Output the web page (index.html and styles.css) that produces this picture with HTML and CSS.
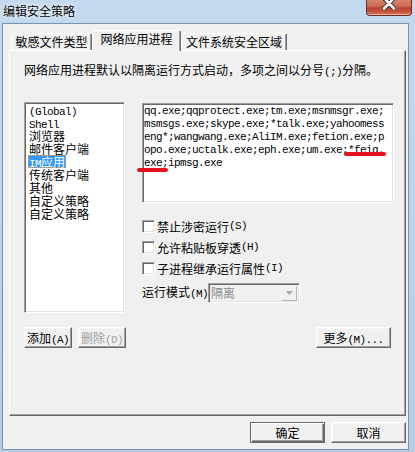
FILE: index.html
```html
<!DOCTYPE html>
<html lang="zh-CN">
<head>
<meta charset="utf-8">
<title>编辑安全策略</title>
<link rel="stylesheet" href="styles.css">
</head>
<body>
<div class="window">
  <div class="titlebar">
    <span class="title">编辑安全策略</span>
    <div class="close">
      <svg width="14" height="10" viewBox="0 0 14 10">
        <path d="M2 -2 L12 8.5 M12 -2 L2 8.5" stroke="#3d2a28" stroke-width="4.6" stroke-linecap="round"/>
        <path d="M2 -2 L12 8.5 M12 -2 L2 8.5" stroke="#ffffff" stroke-width="2.6" stroke-linecap="round"/>
      </svg>
    </div>
  </div>
  <div class="client">
    <div class="tabs">
      <div class="tab t1">敏感文件类型</div>
      <div class="tab t2 active">网络应用进程</div>
      <div class="tab t3">文件系统安全区域</div>
    </div>
    <div class="panel">
      <p class="desc">网络应用进程默认以隔离运行方式启动，多项之间以分号<span class="a">(;)</span>分隔。</p>
      <div class="main">
        <ul class="list">
          <li><span class="it a">(Global)</span></li>
          <li><span class="it a">Shell</span></li>
          <li><span class="it">浏览器</span></li>
          <li><span class="it">邮件客户端</span></li>
          <li><span class="it sel"><span class="a">IM</span>应用</span></li>
          <li><span class="it">传统客户端</span></li>
          <li><span class="it">其他</span></li>
          <li><span class="it">自定义策略</span></li>
          <li><span class="it">自定义策略</span></li>
        </ul>
        <div class="right">
          <div class="edit-wrap">
            <div class="edit">qq.exe;qqprotect.exe;tm.exe;msnmsgr.exe;
msmsgs.exe;skype.exe;*talk.exe;yahoomess
eng*;wangwang.exe;AliIM.exe;fetion.exe;p
opo.exe;uctalk.exe;eph.exe;um.exe;*feiq.
exe;ipmsg.exe</div>
            <i class="mark m1"></i>
            <i class="mark m2"></i>
          </div>
          <label class="chk first"><span class="box"></span>禁止涉密运行<span class="a">(S)</span></label>
          <label class="chk"><span class="box"></span>允许粘贴板穿透<span class="a">(H)</span></label>
          <label class="chk"><span class="box"></span>子进程继承运行属性<span class="a">(I)</span></label>
          <div class="mode">
            <span class="mode-label">运行模式<span class="a">(M)</span></span>
            <div class="combo">
              <span class="val">隔离</span>
              <span class="arrow">
                <svg width="7" height="4" viewBox="0 0 7 4"><path d="M0 0 H7 L3.5 4 Z" fill="#a8a8a8"/></svg>
              </span>
            </div>
          </div>
        </div>
      </div>
      <div class="btnrow">
        <button class="btn small">添加<span class="a">(A)</span></button>
        <button class="btn small second" disabled>删除<span class="a">(D)</span></button>
        <button class="btn wide more">更多<span class="a">(M)...</span></button>
      </div>
    </div>
    <div class="footer">
      <button class="btn wide default">确定</button>
      <button class="btn wide">取消</button>
    </div>
  </div>
</div>
</body>
</html>
```
FILE: styles.css
```css
* { box-sizing: border-box; }

html, body {
  margin: 0;
  padding: 0;
}

body {
  width: 415px;
  height: 452px;
  overflow: hidden;
  font-family: "Noto Sans CJK SC", "Liberation Sans", sans-serif;
  font-size: 12px;
  line-height: 13px;
  color: #000;
  background: linear-gradient(180deg, #c3d9f0 0%, #bcd4ed 40%, #b3cce8 100%);
}

.a {
  font-family: "Liberation Mono", monospace;
  font-size: 11px;
  letter-spacing: -0.6px;
}

.window {
  width: 415px;
  height: 452px;
  display: flex;
  flex-direction: column;
}

/* title bar */
.titlebar {
  flex: none;
  height: 23px;
  display: flex;
  justify-content: space-between;
  align-items: flex-start;
}

.title {
  padding: 4px 0 0 3px;
  line-height: 14px;
  color: #000;
  text-shadow: 0 0 6px rgba(255, 255, 255, 0.95), 0 0 3px rgba(255, 255, 255, 0.9);
}

.close {
  width: 46px;
  height: 16px;
  margin-right: 3px;
  border: 1px solid #6a3028;
  border-top: none;
  border-radius: 0 0 4px 4px;
  background: linear-gradient(180deg, #d7826e 0%, #cd6a52 40%, #b8442e 55%, #c3563d 80%, #d8836a 100%);
  box-shadow: inset 0 -1px 0 rgba(255, 200, 180, 0.6);
  display: flex;
  justify-content: center;
  align-items: flex-start;
}

/* client area */
.client {
  flex: none;
  height: 427px;
  margin: 0 6px 2px 2px;
  border: 1px solid #7d93ad;
  background: #f0f0f0;
  padding: 6px 2px 6px 6px;
  display: flex;
  flex-direction: column;
}

/* tabs */
.tabs {
  flex: none;
  height: 20px;
  display: flex;
  align-items: flex-end;
  padding-left: 2px;
}

.tab {
  height: 17px;
  border: 1px solid;
  border-bottom: none;
  border-color: #ffffff #696969 transparent #ffffff;
  border-radius: 2px 2px 0 0;
  box-shadow: inset -1px 0 0 #a0a0a0;
  background: #f0f0f0;
  text-align: center;
  line-height: 15px;
  white-space: nowrap;
}

.t1 { width: 81px; }
.t2 { width: 89px; }
.t3 { width: 106px; }

.tab.active {
  height: 21px;
  margin-bottom: -1px;
  position: relative;
  z-index: 1;
}

/* panel */
.panel {
  flex: none;
  height: 366px;
  border: 1px solid;
  border-color: #ffffff #696969 #696969 #ffffff;
  box-shadow: inset -1px -1px 0 #a0a0a0;
  padding: 12px 14px 0 14px;
  display: flex;
  flex-direction: column;
}

.desc {
  margin: 0;
  height: 13px;
  line-height: 13px;
  white-space: nowrap;
}

.main {
  margin-top: 26px;
  display: flex;
  gap: 17px;
  align-items: flex-start;
}

.sunken {
  background: #fff;
}

.list {
  flex: none;
  width: 101px;
  height: 211px;
  margin: 0;
  padding: 0 0 0 2px;
  list-style: none;
  background: #fff;
  border: 1px solid;
  border-color: #a0a0a0 #ffffff #ffffff #a0a0a0;
  box-shadow: inset 1px 1px 0 #696969, inset -1px -1px 0 #e3e3e3;
}

.list li {
  height: 13px;
  line-height: 13px;
  padding-left: 1px;
  white-space: nowrap;
}

.it {
  display: inline-block;
  height: 13px;
  padding: 0 1px;
}

.it.sel {
  background: #3399ff;
  color: #fff;
  outline: 1px dotted #f4a340;
  outline-offset: -1px;
}

.right {
  flex: none;
  width: 252px;
  display: flex;
  flex-direction: column;
}

.edit-wrap {
  position: relative;
  margin-top: 1px;
  height: 100px;
}

.edit {
  height: 100px;
  background: #fff;
  border: 1px solid;
  border-color: #a0a0a0 #ffffff #ffffff #a0a0a0;
  box-shadow: inset 1px 1px 0 #696969, inset -1px -1px 0 #e3e3e3;
  padding: 1px 0 0 1px;
  font-family: "Liberation Mono", monospace;
  font-size: 11px;
  letter-spacing: -0.6px;
  line-height: 13px;
  white-space: pre;
  overflow: hidden;
}

.mark {
  position: absolute;
  height: 4px;
  border-radius: 2px;
  background: #e3141d;
}

.m1 { left: 202px; top: 49px; width: 42px; }
.m2 { left: -5px; top: 65px; width: 31px; }

.chk {
  height: 21px;
  display: flex;
  align-items: center;
  white-space: nowrap;
}

.chk.first { margin-top: 13px; }

.box {
  flex: none;
  width: 13px;
  height: 13px;
  margin-right: 2px;
  background: #fff;
  border: 1px solid;
  border-color: #a0a0a0 #ffffff #ffffff #a0a0a0;
  box-shadow: inset 1px 1px 0 #696969, inset -1px -1px 0 #e3e3e3;
}

.mode {
  margin-top: 4px;
  height: 20px;
  display: flex;
  align-items: center;
}

.mode-label {
  width: 66px;
  white-space: nowrap;
}

.combo {
  width: 92px;
  height: 20px;
  border: 1px solid;
  border-color: #a0a0a0 #ffffff #ffffff #a0a0a0;
  box-shadow: inset 1px 1px 0 #696969, inset -1px -1px 0 #e3e3e3;
  background: #f0f0f0;
  padding: 2px 2px 2px 2px;
  display: flex;
  align-items: center;
  color: #8c8c8c;
}

.val {
  flex: 1;
  line-height: 14px;
}

.arrow {
  width: 16px;
  height: 15px;
  border: 1px solid;
  border-color: #f8f8f8 #b8b8b8 #b8b8b8 #f8f8f8;
  background: #f0f0f0;
  display: flex;
  justify-content: center;
  align-items: center;
}

.arrow svg { display: block; }

/* buttons */
.btnrow {
  margin-top: 14px;
  display: flex;
}

.btn {
  font: inherit;
  font-size: 12px;
  line-height: 19px;
  color: #000;
  height: 21px;
  padding: 0;
  background: #f0f0f0;
  border: 1px solid;
  border-color: #ffffff #696969 #696969 #ffffff;
  box-shadow: inset -1px -1px 0 #a0a0a0, inset 1px 1px 0 #f6f6f6;
  white-space: nowrap;
}

.btn.small { width: 48px; }
.btn.wide { width: 75px; }
.btn.second { margin-left: 6px; }
.btn.more { margin-left: auto; }

.btn:disabled {
  color: #a0a0a0;
}

.btn.default {
  border-color: #696969;
  box-shadow: inset 1px 1px 0 #ffffff, inset -1px -1px 0 #696969, inset -2px -2px 0 #a0a0a0;
}

.footer {
  margin-top: 6px;
  display: flex;
  justify-content: flex-end;
  gap: 6px;
}
```
